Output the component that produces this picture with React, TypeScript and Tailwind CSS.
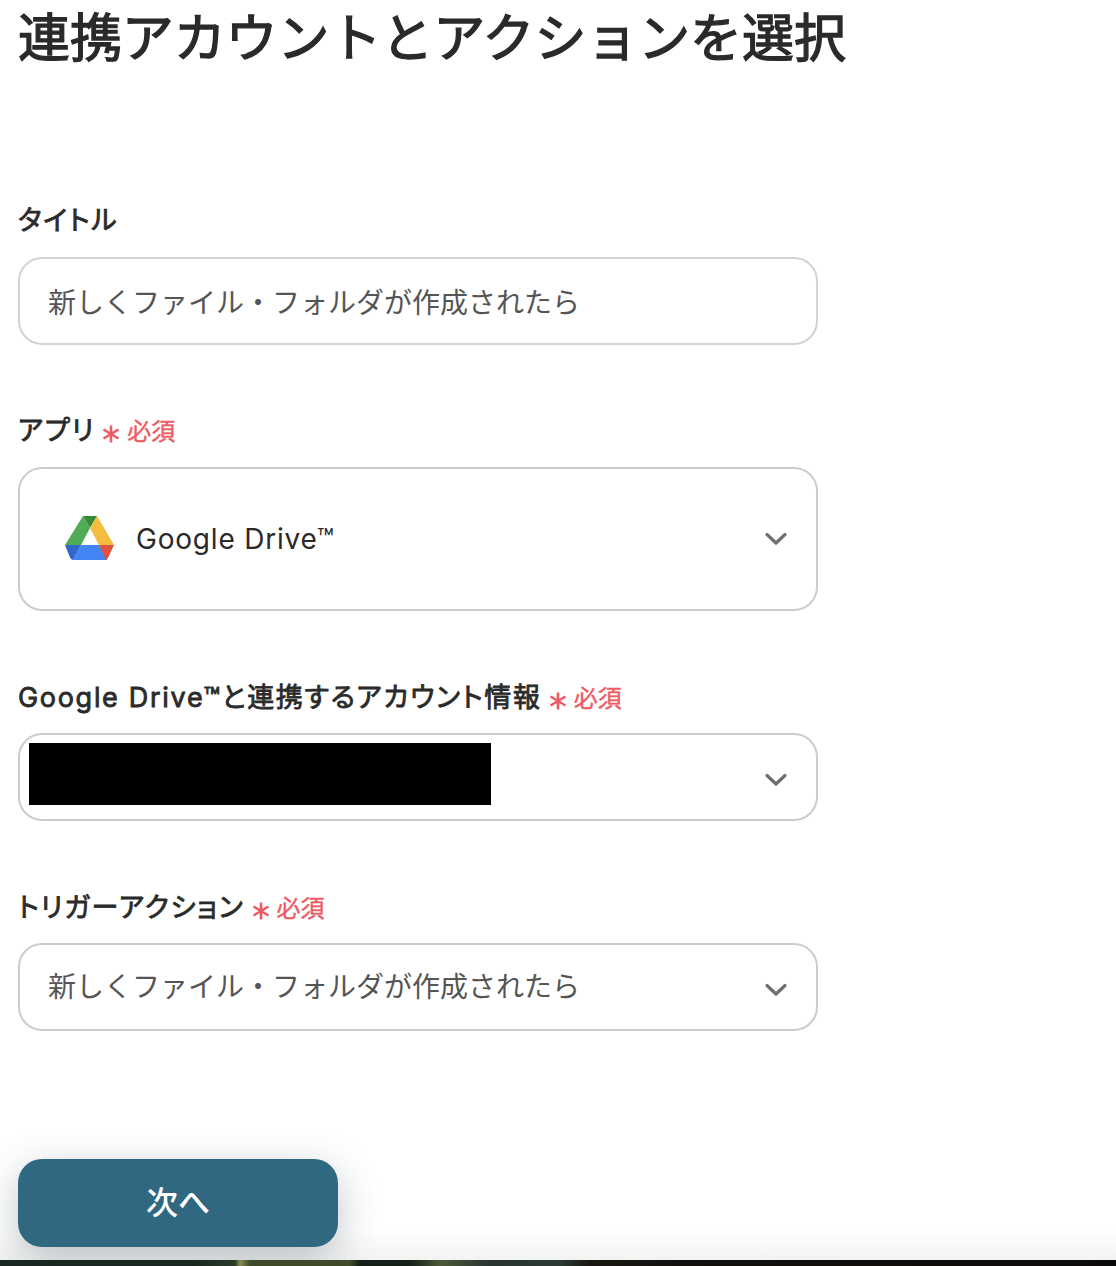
const FONT = "font-['Inter','Noto_Sans_CJK_JP',sans-serif]";

const Chevron = ({ low }: { low?: boolean }) => (
  <svg width="24" height="24" viewBox="0 0 24 24" fill="none" className={low ? "flex-shrink-0 mt-[6px]" : "flex-shrink-0"}>
    <path d="M3 7.5L12 16L21 7.5" stroke="#6f6f6f" strokeWidth="3.2" strokeLinecap="round" strokeLinejoin="round" />
  </svg>
);

const DriveLogo = () => (
  <svg width="50" height="44" viewBox="0 0 50 44" className="mb-[2px]">
    <path d="M18 0 L25 12 L16 29 L0 29 Z" fill="#4fab55" />
    <path d="M18 0 H32 L25 12 Z" fill="#3b8a3a" />
    <path d="M32 0 L49 29 H34 L25 12 Z" fill="#f6bc41" />
    <path d="M16 29 H34 L42 44 H8 Z" fill="#4285f4" />
    <path d="M0 29 H16 L8 44 Q6 43.5 5 41.5 Z" fill="#2f66d0" />
    <path d="M34 29 H49 L43 42 Q42.5 43.5 41 44 Z" fill="#dc5341" />
  </svg>
);

const Asterisk = () => (
  <svg width="18" height="18" viewBox="0 0 18 18" fill="none" className="relative top-[4px]">
    <path d="M9 0.5V17.5M1.5 4.5L16.5 13.5M16.5 4.5L1.5 13.5" stroke="#ee5b65" strokeWidth="2.6" />
  </svg>
);

const Label = ({ text, required }: { text: string; required?: boolean }) => (
  <div className="flex items-center h-[36px] text-[27px] leading-[36px] font-normal tracking-[1.7px] [font-feature-settings:'palt'] text-[#2a2a2a]">
    <span className="relative top-[1px] [-webkit-text-stroke:0.8px_#2a2a2a]">{text}</span>
    {required && (
      <span className="flex items-center ml-[7px] text-[#ee5b65] text-[24px] tracking-normal [-webkit-text-stroke:0.4px_#ee5b65]">
        <Asterisk />
        <span className="relative top-[2px] ml-[7px]">必須</span>
      </span>
    )}
  </div>
);

const SelectBox = ({ children, height, low }: { children?: React.ReactNode; height: string; low?: boolean }) => (
  <div className={`flex items-center justify-between w-[800px] ${height} border-2 border-[#cccccc] rounded-[24px] bg-white pr-[28px]`}>
    {children}
    <Chevron low={low} />
  </div>
);

export default function App() {
  return (
    <div className={`relative w-[1116px] h-[1266px] overflow-hidden bg-white ${FONT}`}>
      <div className="pl-[18px]">
        <h1 className="pt-[4px] h-[74px] text-[52px] leading-[70px] font-normal tracking-[-0.1px] [-webkit-text-stroke:1.3px_#2a2a2a] text-[#2a2a2a] whitespace-nowrap">
          連携アカウントとアクションを選択
        </h1>

        <div className="mt-[128px]">
          <Label text="タイトル" />
        </div>
        <div className="mt-[19px] flex items-center w-[800px] h-[88px] border-2 border-[#cfd4d8] rounded-[24px] px-[28px] pt-[4px] text-[28px] text-[#555555] whitespace-nowrap">
          新しくファイル・フォルダが作成されたら
        </div>

        <div className="mt-[67px]">
          <Label text="アプリ" required />
        </div>
        <div className="mt-[19px]">
          <SelectBox height="h-[144px]">
            <div className="flex items-center pl-[45px]">
              <DriveLogo />
              <span className="ml-[21px] text-[28px] tracking-[0.8px] text-[#2a2a2a] whitespace-nowrap">
                Google Drive™
              </span>
            </div>
          </SelectBox>
        </div>

        <div className="mt-[68px]">
          <Label text="Google Drive™と連携するアカウント情報" required />
        </div>
        <div className="mt-[18px]">
          <SelectBox height="h-[88px]" low>
            <div className="ml-[9px] mb-[6px] w-[462px] h-[62px] bg-black" />
          </SelectBox>
        </div>

        <div className="mt-[68px]">
          <Label text="トリガーアクション" required />
        </div>
        <div className="mt-[18px]">
          <SelectBox height="h-[88px]" low>
            <span className="pl-[28px] text-[28px] text-[#555555] whitespace-nowrap">
              新しくファイル・フォルダが作成されたら
            </span>
          </SelectBox>
        </div>

        <button className="relative z-10 mt-[128px] block w-[320px] h-[88px] rounded-[24px] bg-[#2f6880] text-white text-[32px] font-medium shadow-[0_12px_40px_rgba(40,60,70,0.3)]">
          次へ
        </button>
      </div>

      {/* fade above the photo */}
      <div className="absolute left-0 right-0 bottom-[6px] h-[30px] bg-gradient-to-b from-white to-[#f3f3f3]" />
      {/* photo strip cut off at the bottom */}
      <div className="absolute z-20 left-0 right-0 bottom-0 h-[6px] bg-[linear-gradient(90deg,#1a2620_0px,#1a2620_195px,#2c3a28_235px,#8a8a55_240px,#3e4a2a_250px,#3e4a2a_350px,#141f18_360px,#141f18_410px,#4d5838_440px,#283430_490px,#2a3a33_560px,#1a1612_590px,#120e0c_700px,#0c0a09_1116px)]" />
    </div>
  );
}
